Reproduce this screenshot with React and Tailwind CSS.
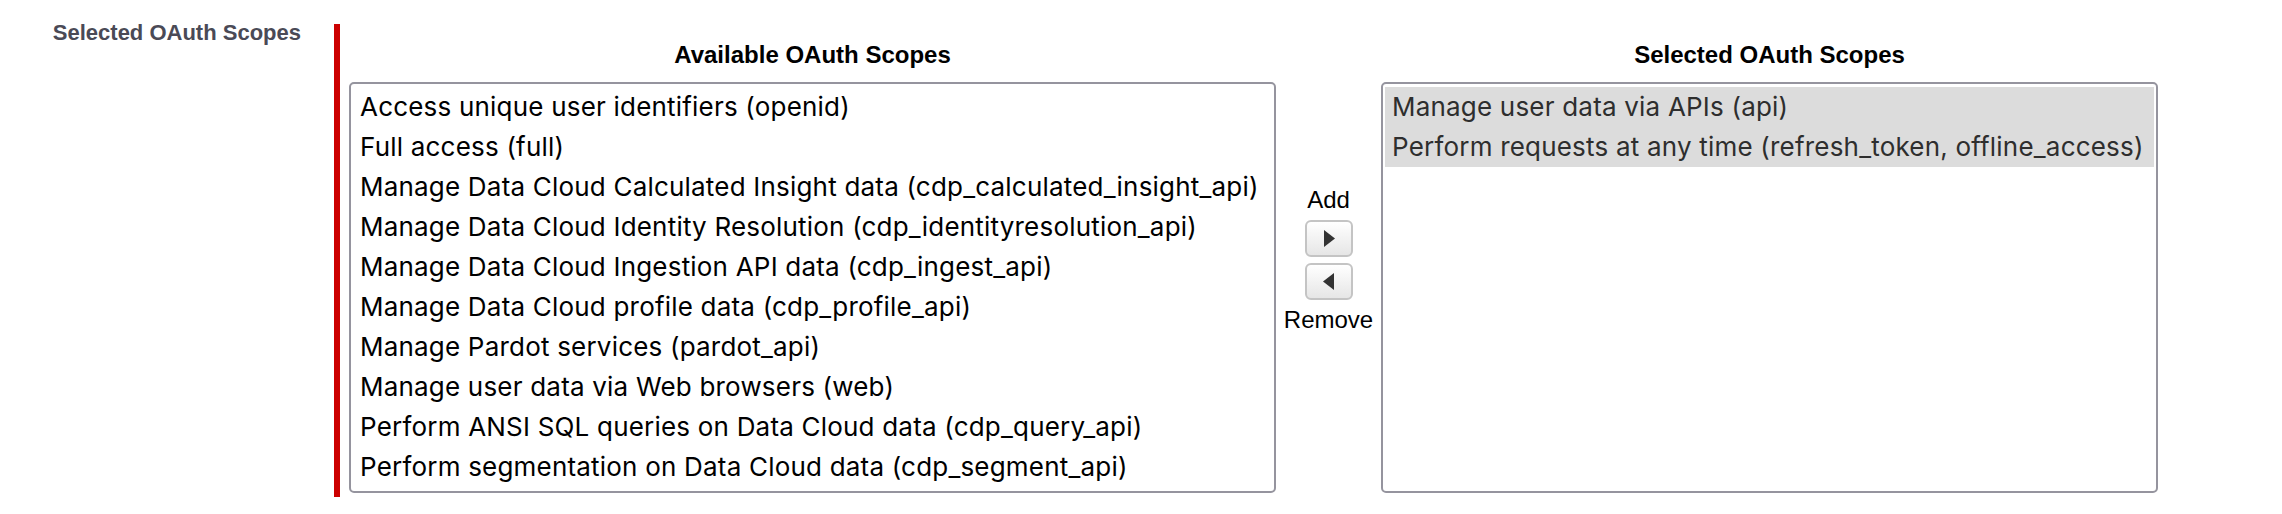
const AVAILABLE = [
  'Access unique user identifiers (openid)',
  'Full access (full)',
  'Manage Data Cloud Calculated Insight data (cdp_calculated_insight_api)',
  'Manage Data Cloud Identity Resolution (cdp_identityresolution_api)',
  'Manage Data Cloud Ingestion API data (cdp_ingest_api)',
  'Manage Data Cloud profile data (cdp_profile_api)',
  'Manage Pardot services (pardot_api)',
  'Manage user data via Web browsers (web)',
  'Perform ANSI SQL queries on Data Cloud data (cdp_query_api)',
  'Perform segmentation on Data Cloud data (cdp_segment_api)',
]

const SELECTED = [
  'Manage user data via APIs (api)',
  'Perform requests at any time (refresh_token, offline_access)',
]

function ListBox({ title, items, width, selected }) {
  return (
    <div className="flex flex-col" style={{ width }}>
      <div className="h-[28px] leading-[28px] text-center text-[24px] font-bold text-black mb-[13px] whitespace-nowrap">{title}</div>
      <div className="h-[411px] border-2 border-[#95949e] rounded-[5px] p-[2px] pt-[3px] overflow-hidden bg-white">
        {items.map((item) => (
          <div
            key={item}
            className={
              "h-[40px] leading-[40px] px-[7px] text-[26px] tracking-[0.2px] font-['Inter',sans-serif] whitespace-nowrap " +
              (selected ? 'bg-[#dcdcdc] text-[#2e2e2e]' : 'text-black')
            }
          >
            {item}
          </div>
        ))}
      </div>
    </div>
  )
}

function ArrowButton({ dir }) {
  return (
    <button
      type="button"
      className="w-[48px] h-[37px] flex items-center justify-center rounded-[6px] border-2 border-[#c4c4c4] bg-gradient-to-b from-[#ffffff] to-[#e6e6e6]"
    >
      <svg width="12" height="17" viewBox="0 0 12 17">
        {dir === 'right' ? (
          <polygon points="1,0 12,8.5 1,17" fill="#333" />
        ) : (
          <polygon points="11,0 0,8.5 11,17" fill="#333" />
        )}
      </svg>
    </button>
  )
}

export default function App() {
  return (
    <div
      className="w-[2282px] h-[514px] bg-white flex items-start pt-[20px]"
      style={{ fontFamily: '"Liberation Sans", Arial, Helvetica, sans-serif' }}
    >
      <div className="w-[301px] shrink-0 text-right text-[22px] leading-[26px] font-bold text-[#4a4a56] whitespace-nowrap">
        Selected OAuth Scopes
      </div>

      <div className="ml-[33px] mt-[4px] border-l-[6px] border-[#cc0000] pl-[9px] pt-[17px] pb-[4px] flex items-start">
        <ListBox title="Available OAuth Scopes" items={AVAILABLE} width={927} />

        <div className="w-[105px] shrink-0 pt-[145px] flex flex-col items-center gap-[6px] text-[24px] leading-[28px] text-black">
          <div>Add</div>
          <ArrowButton dir="right" />
          <ArrowButton dir="left" />
          <div>Remove</div>
        </div>

        <ListBox title="Selected OAuth Scopes" items={SELECTED} width={777} selected />
      </div>
    </div>
  )
}
